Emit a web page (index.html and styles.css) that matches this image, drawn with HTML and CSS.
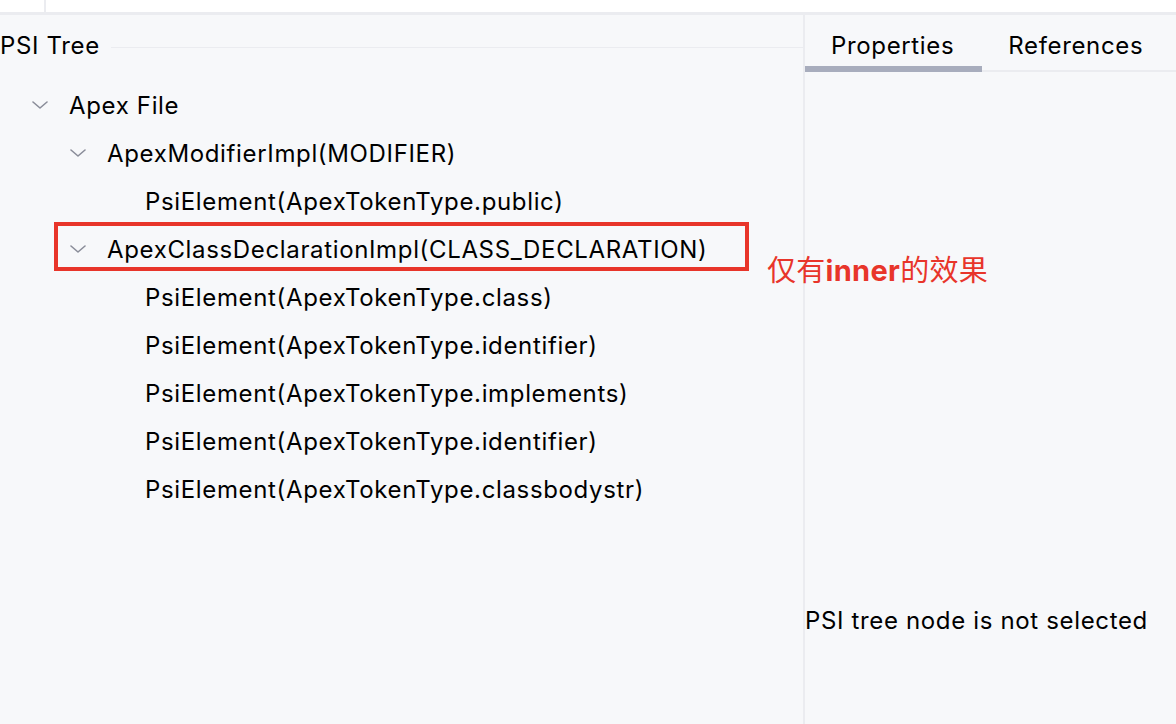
FILE: index.html
```html
<!DOCTYPE html>
<html lang="en">
<head>
<meta charset="utf-8">
<title>PSI Viewer</title>
<link rel="stylesheet" href="styles.css">
</head>
<body>
<div class="page">
  <div class="topbar"><div class="topcell"></div></div>
  <div class="main">
    <div class="left">
      <div class="titlerow"><span class="title">PSI Tree</span><span class="rule"></span></div>
      <div class="tree">
        <div class="row l0"><svg class="chev" viewBox="0 0 16 8"><path d="M1 1 L8 7 L15 1"/></svg><span>Apex File</span></div>
        <div class="row l1"><svg class="chev" viewBox="0 0 16 8"><path d="M1 1 L8 7 L15 1"/></svg><span>ApexModifierImpl(MODIFIER)</span></div>
        <div class="row l2"><span class="spacer"></span><span>PsiElement(ApexTokenType.public)</span></div>
        <div class="row l1"><svg class="chev" viewBox="0 0 16 8"><path d="M1 1 L8 7 L15 1"/></svg><span>ApexClassDeclarationImpl(CLASS_DECLARATION)</span></div>
        <div class="row l2"><span class="spacer"></span><span>PsiElement(ApexTokenType.class)</span></div>
        <div class="row l2"><span class="spacer"></span><span>PsiElement(ApexTokenType.identifier)</span></div>
        <div class="row l2"><span class="spacer"></span><span>PsiElement(ApexTokenType.implements)</span></div>
        <div class="row l2"><span class="spacer"></span><span>PsiElement(ApexTokenType.identifier)</span></div>
        <div class="row l2"><span class="spacer"></span><span>PsiElement(ApexTokenType.classbodystr)</span></div>
      </div>
    </div>
    <div class="right">
      <div class="tabs">
        <div class="tab active">Properties</div>
        <div class="tab">References</div>
        <div class="tabfill"></div>
      </div>
      <div class="empty">PSI tree node is not selected</div>
    </div>
  </div>
  <div class="markbox"></div>
  <div class="marktext">仅有<b>inner</b>的效果</div>
</div>
</body>
</html>
```

FILE: styles.css
```css
* { box-sizing: border-box; }
html, body { margin: 0; padding: 0; }
body {
  background: #f7f8fa;
  font-family: Inter, "Noto Sans", sans-serif;
  font-size: 24px;
  letter-spacing: 0.65px;
  color: #000;
  width: 1176px;
  height: 724px;
  overflow: hidden;
}
.page { position: relative; width: 1176px; height: 724px; }
.topbar {
  height: 15px;
  background: #fff;
  border-bottom: 3px solid #ebecf0;
}
.topcell {
  width: 46px;
  height: 12px;
  border-right: 2px solid #ebecf0;
}
.main { display: flex; height: 709px; }
.left {
  width: 805px;
  border-right: 2px solid #ebecf0;
  display: flex;
  flex-direction: column;
}
.titlerow {
  height: 66px;
  display: flex;
  align-items: flex-start;
  padding-top: 16px;
}
.title { line-height: 29px; white-space: nowrap; }
.rule {
  flex: 1;
  height: 1px;
  background: #ebecf0;
  margin-left: 11px;
  margin-top: 16px;
}
.tree { display: flex; flex-direction: column; }
.row {
  height: 48px;
  display: flex;
  align-items: center;
  white-space: nowrap;
}
.l0 { padding-left: 32px; }
.l1 { padding-left: 70px; }
.l2 { padding-left: 108px; }
.chev {
  width: 16px;
  height: 8px;
  margin-right: 21px;
  flex: none;
}
.chev path { fill: none; stroke: #8a8d99; stroke-width: 1.6; stroke-linecap: round; stroke-linejoin: round; }
.spacer { width: 37px; flex: none; }
.right { flex: 1; display: flex; flex-direction: column; }
.tabs { display: flex; height: 57px; }
.tab {
  padding: 14px 26px 0 26px;
  line-height: 33px;
  border-bottom: 2px solid #ebecf0;
  white-space: nowrap;
}
.tab.active { border-bottom: 6px solid #a8adbd; padding-left: 26px; padding-right: 28px; }
.tabfill { flex: 1; border-bottom: 2px solid #ebecf0; }
.empty { padding-top: 534px; padding-left: 0; white-space: nowrap; line-height: 29px; }
.markbox {
  position: absolute;
  left: 54px;
  top: 222px;
  width: 695px;
  height: 49px;
  border: 4px solid #e8352a;
}
.marktext {
  position: absolute;
  left: 767px;
  top: 249px;
  font-size: 29px;
  line-height: 38px;
  letter-spacing: 0.3px;
  color: #e8352a;
  font-family: "Noto Sans CJK SC", Inter, sans-serif;
  white-space: nowrap;
}
.marktext b { font-family: Inter, "Noto Sans CJK SC", sans-serif; font-weight: 700; }
```
